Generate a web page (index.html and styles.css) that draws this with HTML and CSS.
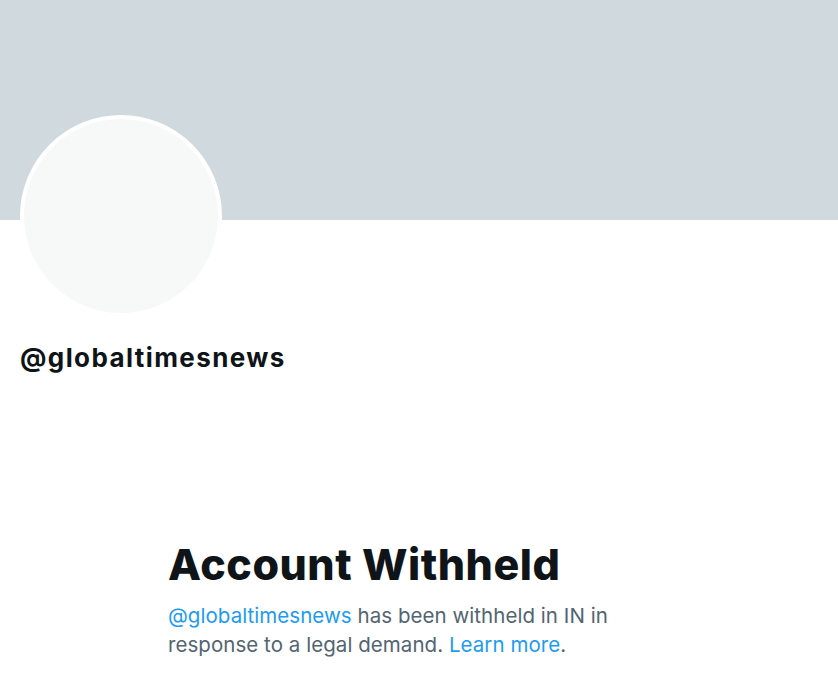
FILE: index.html
```html
<!DOCTYPE html>
<html>
<head>
  <title>@globaltimesnews</title>
  <link rel="stylesheet" href="styles.css">
</head>
<body>
  <div class="banner"></div>

  <div class="profile">
    <div class="avatar"></div>
    <div class="handle">@globaltimesnews</div>
  </div>

  <div class="withheld">
    <h1>Account Withheld</h1>
    <p><a href="#">@globaltimesnews</a> has been withheld in IN in<br>response to a legal demand. <a href="#">Learn more</a>.</p>
  </div>
</body>
</html>
```

FILE: styles.css
```css
body {
  font-family: Inter, "Noto Sans", sans-serif;
  margin: 0;
  padding: 0;
  background: #fff;
  color: #0f1419;
}

.banner {
  height: 220px;
  background: #cfd9de;
}

.profile {
  padding: 0 20px;
}

.avatar {
  width: 194px;
  height: 194px;
  margin-top: -105px;
  border: 4px solid #fff;
  border-radius: 50%;
  background: #f7f9f9;
}

.handle {
  margin-top: 25px;
  font-size: 26px;
  font-weight: 700;
  line-height: 32px;
  letter-spacing: 1.4px;
}

.withheld {
  padding: 165px 0 0 168px;
}

.withheld h1 {
  margin: 0;
  font-size: 43px;
  font-weight: 800;
  line-height: 50px;
  letter-spacing: 0.5px;
}

.withheld p {
  margin: 12px 0 0;
  font-size: 20.5px;
  line-height: 29px;
  letter-spacing: 0.05px;
  color: #536471;
}

.withheld a {
  color: #1d9bf0;
  text-decoration: none;
}
```
